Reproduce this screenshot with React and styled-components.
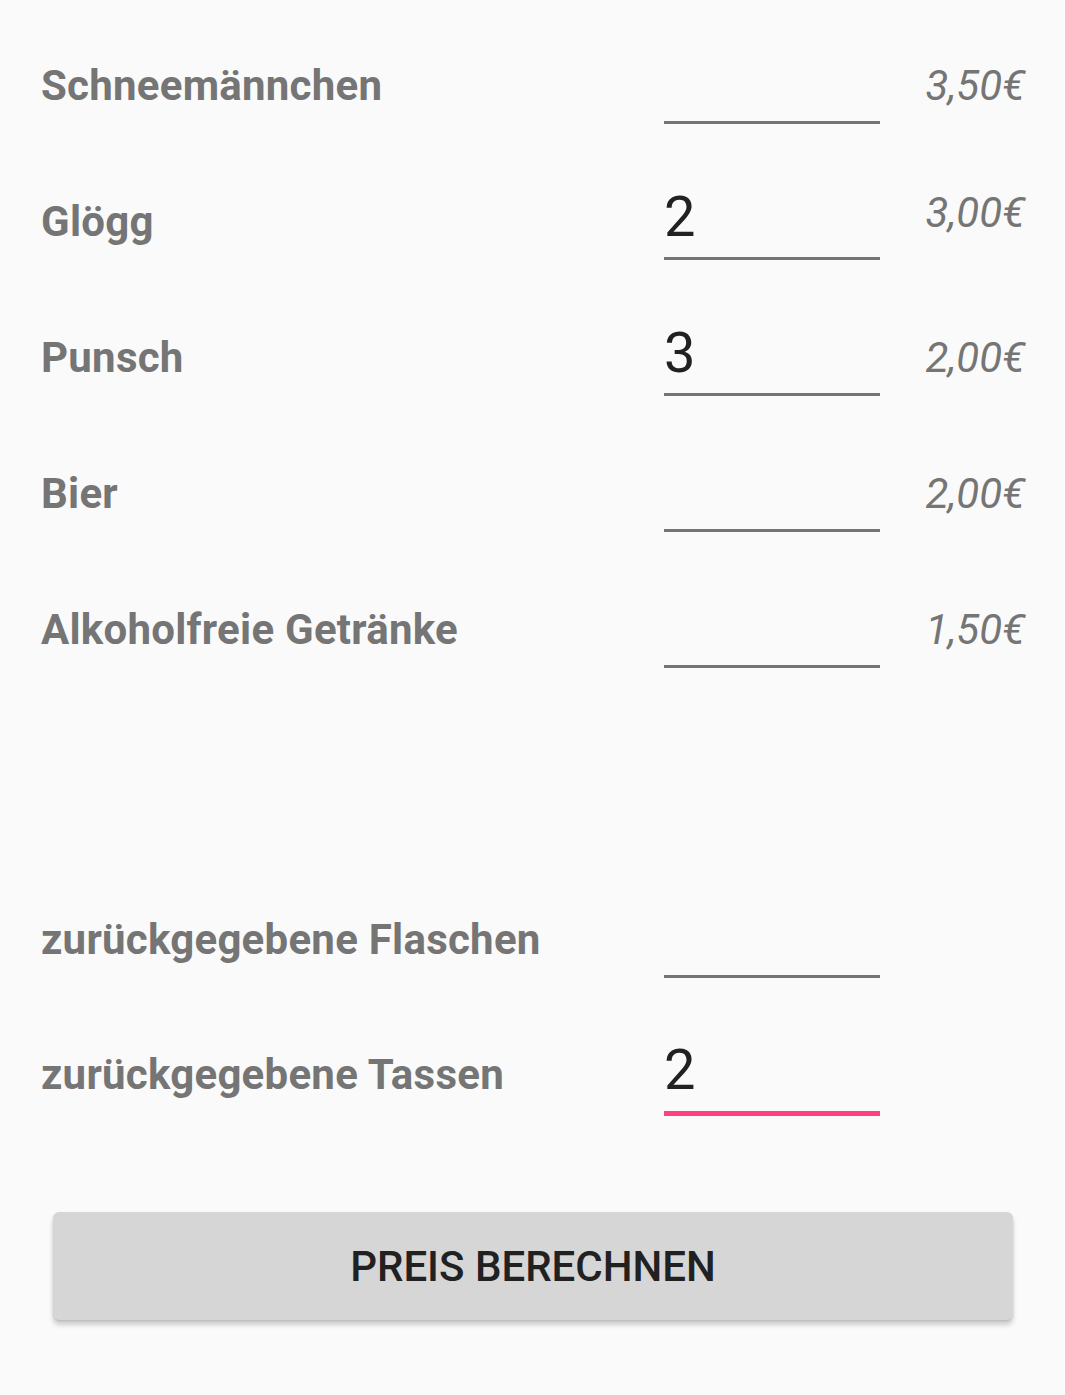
import React from 'react';
import styled, { createGlobalStyle } from 'styled-components';

const GlobalStyle = createGlobalStyle`
  html, body {
    margin: 0;
    padding: 0;
    background: #fafafa;
    font-family: Roboto, "Noto Sans", sans-serif;
  }
`;

const Screen = styled.div`
  width: 1065px;
  min-height: 1395px;
  background: #fafafa;
`;

const Form = styled.div`
  padding: 0 40px 0 41px;
`;

const Row = styled.div`
  display: grid;
  grid-template-columns: 1fr 216px 145px;
  align-items: start;
  height: ${(p) => p.$height || 136}px;
`;

const Label = styled.div`
  padding-top: 62px;
  font-size: 42px;
  line-height: 48px;
  font-weight: 700;
  letter-spacing: 0.25px;
  color: #757575;
  white-space: nowrap;
`;

const Field = styled.input`
  box-sizing: content-box;
  width: 216px;
  height: 64px;
  margin: 49px 0 0 0;
  padding: 0 0 ${(p) => (p.$focused ? 9 : 8)}px 0;
  border: none;
  border-bottom: ${(p) => (p.$focused ? '5px solid #ff4081' : '3px solid #757575')};
  background: transparent;
  font-family: Roboto, sans-serif;
  font-size: 56px;
  line-height: 64px;
  color: #212121;
  outline: none;
`;

const Price = styled.div`
  padding-top: ${(p) => (p.$raised ? 53 : 62)}px;
  text-align: right;
  font-size: 42px;
  line-height: 48px;
  font-style: italic;
  color: #757575;
`;

const Spacer = styled.div`
  height: 174px;
`;

const ButtonWrap = styled.div`
  padding: 87px 52px 0 53px;
`;

const CalcButton = styled.button`
  display: block;
  width: 100%;
  height: 108px;
  border: none;
  border-radius: 6px;
  background: #d6d6d6;
  box-shadow: 0 5px 5px rgba(0, 0, 0, 0.18), 0 1px 2px rgba(0, 0, 0, 0.1);
  font-family: Roboto, sans-serif;
  font-size: 42px;
  font-weight: 500;
  color: #212121;
  text-transform: uppercase;
  cursor: pointer;
`;

const items = [
  { name: 'Schneemännchen', price: '3,50€', amount: '' },
  { name: 'Glögg', price: '3,00€', amount: '2', raised: true },
  { name: 'Punsch', price: '2,00€', amount: '3' },
  { name: 'Bier', price: '2,00€', amount: '' },
  { name: 'Alkoholfreie Getränke', price: '1,50€', amount: '' },
];

const returns = [
  { name: 'zurückgegebene Flaschen', amount: '', height: 135 },
  { name: 'zurückgegebene Tassen', amount: '2', focused: true },
];

export default function App() {
  return (
    <Screen>
      <GlobalStyle />
      <Form>
        {items.map((item) => (
          <Row key={item.name}>
            <Label>{item.name}</Label>
            <Field type="text" defaultValue={item.amount} />
            <Price $raised={item.raised}>{item.price}</Price>
          </Row>
        ))}
        <Spacer />
        {returns.map((item) => (
          <Row key={item.name} $height={item.height}>
            <Label>{item.name}</Label>
            <Field type="text" defaultValue={item.amount} $focused={item.focused} />
            <div />
          </Row>
        ))}
      </Form>
      <ButtonWrap>
        <CalcButton>Preis berechnen</CalcButton>
      </ButtonWrap>
    </Screen>
  );
}
